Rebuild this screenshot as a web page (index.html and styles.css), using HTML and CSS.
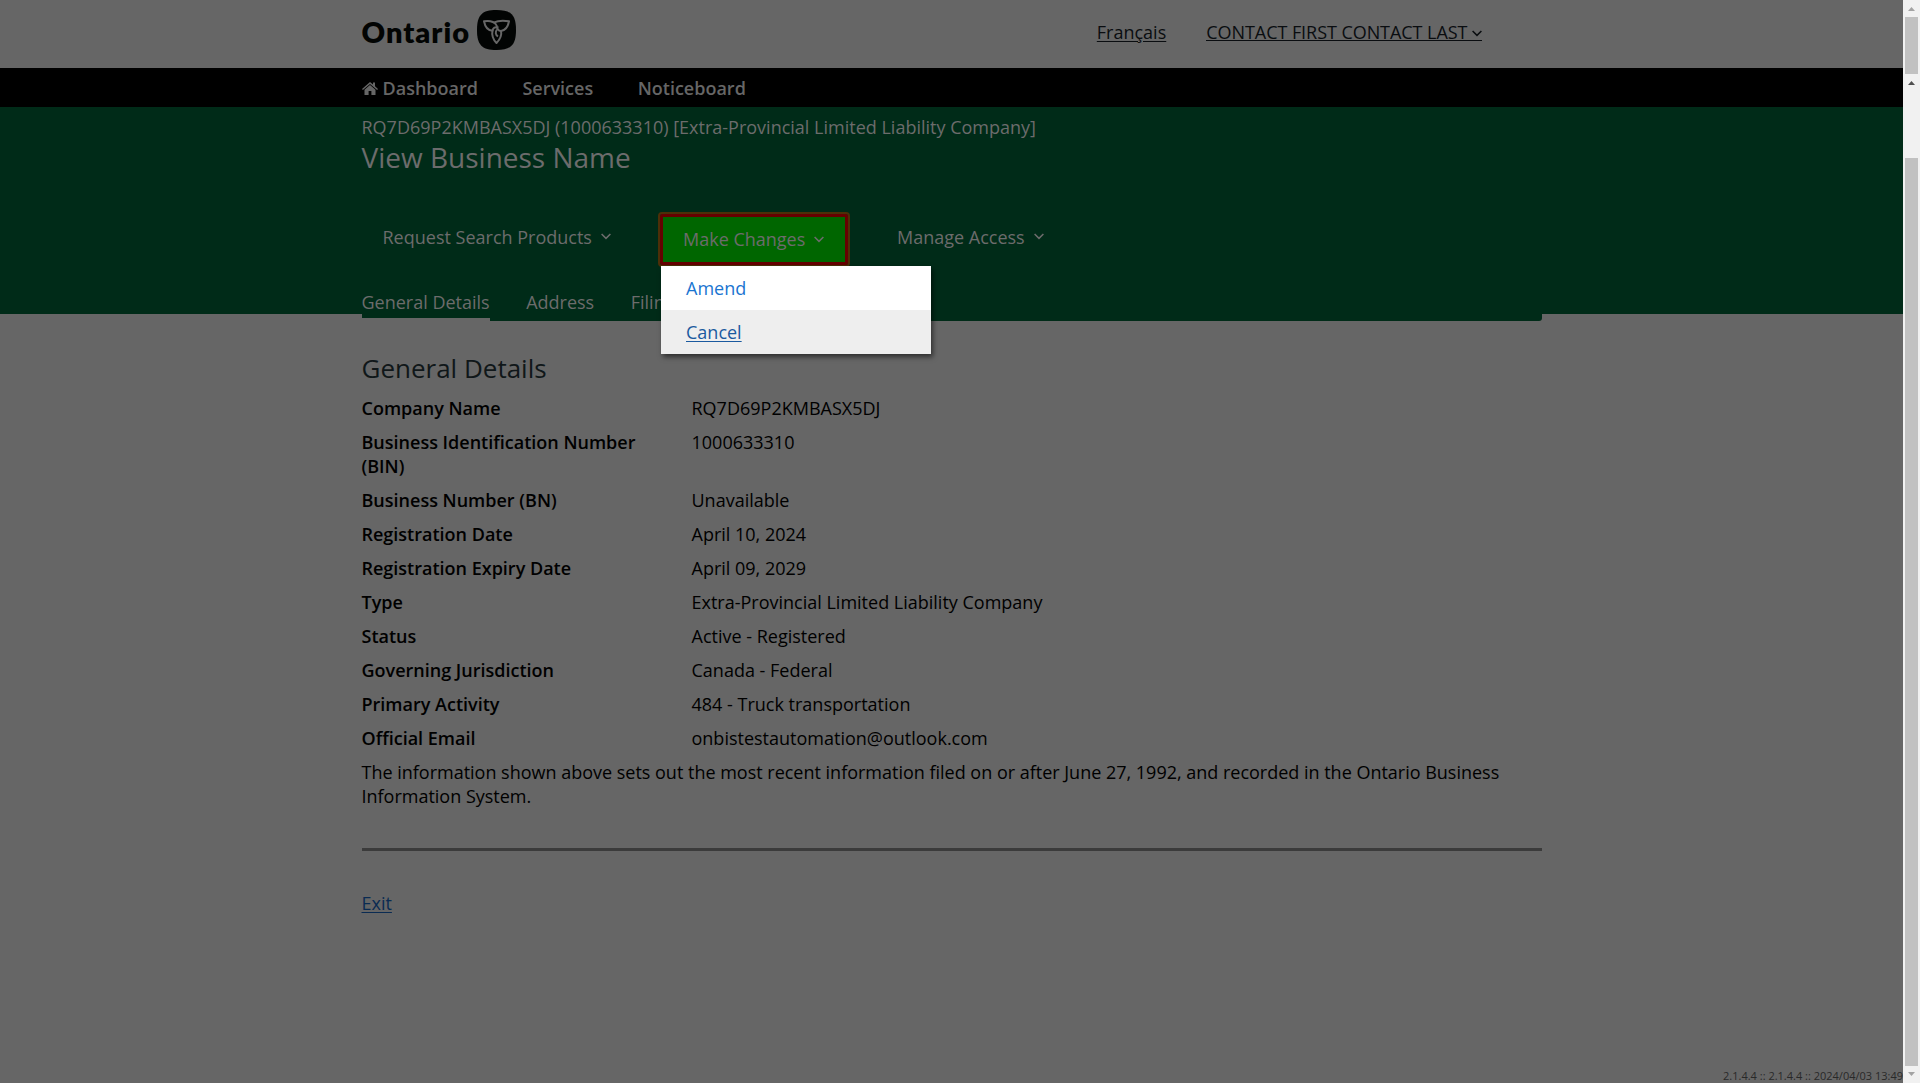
FILE: index.html
```html
<!DOCTYPE html>
<html lang="en">
<head>
<meta charset="utf-8">
<title>View Business Name</title>
<link rel="stylesheet" href="styles.css">
</head>
<body>
<div class="page">
  <header class="top">
    <div class="wrap top-row">
      <div class="logo">
        <span class="logo-word">Ontario</span>
        <svg class="logo-mark" viewBox="0 0 39 40"><path d="M19.500 0C34 0 39 5 39 20S34 40 19.500 40 0 35 0 20 5 0 19.500 0Z" fill="#020403"/><g fill="none" stroke="#666" stroke-width="2" stroke-linejoin="round"><path d="M19.500 15C17 11.500 12 10.500 7 11.300C8 16.500 10.500 20.500 15.500 20.800C16 18 18 16.500 21.500 17.500"/><path d="M16.500 12.700C21 10.500 27 10.300 32 11.300C31 16.500 28.500 20.500 24 21C20.500 20.800 19.800 18.500 19.500 15"/><path d="M15.500 20C14.500 25.500 16 29.500 19.500 33C23 29.500 25 25.500 24 20.500M20 19.500C18 22 18.500 25 21 26.500"/></g></svg>
      </div>
      <div class="user-links">
        <a class="link-lang">Français</a>
        <a class="link-user">CONTACT FIRST CONTACT LAST <svg class="chev" viewBox="0 0 10 7"><path d="M.6 1l4.400 4.400L9.400 1"/></svg></a>
      </div>
    </div>
  </header>
  <nav class="main-nav">
    <div class="wrap nav-row">
      <a class="nav-home"><svg class="home" viewBox="0 0 16 13"><path d="M8 0 0 7l.9 1L8 2l7.100 6 .9-1-3-2.700V.6h-2v2z"/><path d="M8 3 2.500 7.700V13H6.600V9h2.800v4h4.100V7.700z"/></svg>Dashboard</a>
      <a class="nav-services">Services</a>
      <a class="nav-notice">Noticeboard</a>
    </div>
  </nav>
  <section class="banner">
    <div class="wrap">
      <p class="entity">RQ7D69P2KMBASX5DJ (1000633310) [Extra-Provincial Limited Liability Company]</p>
      <h1>View Business Name</h1>
      <div class="actions">
        <a class="action products">Request Search Products<svg class="chev" viewBox="0 0 10 7"><path d="M.6 1l4.400 4.400L9.400 1"/></svg></a>
        <div class="action-menu">
          <a class="action changes">Make Changes<svg class="chev" viewBox="0 0 10 7"><path d="M.6 1l4.400 4.400L9.400 1"/></svg></a>
          <div class="menu"><a>Amend</a><a class="hover"><u>Cancel</u></a></div>
        </div>
        <a class="action access">Manage Access<svg class="chev" viewBox="0 0 10 7"><path d="M.6 1l4.400 4.400L9.400 1"/></svg></a>
      </div>
      <div class="tabs">
        <a class="tab active"><span>General Details</span></a>
        <a class="tab address"><span>Address</span></a>
        <a class="tab"><span>Filings</span></a>
      </div>
    </div>
  </section>
  <main class="wrap details">
    <h2>General Details</h2>
    <dl>
      <dt><span>Company Name</span></dt><dd><span>RQ7D69P2KMBASX5DJ</span></dd>
      <dt><span>Business Identification Number<br>(BIN)</span></dt><dd><span>1000633310</span></dd>
      <dt><span>Business Number (BN)</span></dt><dd><span>Unavailable</span></dd>
      <dt><span>Registration Date</span></dt><dd><span>April 10, 2024</span></dd>
      <dt><span>Registration Expiry Date</span></dt><dd><span>April 09, 2029</span></dd>
      <dt><span>Type</span></dt><dd><span>Extra-Provincial Limited Liability Company</span></dd>
      <dt><span>Status</span></dt><dd><span>Active - Registered</span></dd>
      <dt><span>Governing Jurisdiction</span></dt><dd><span>Canada - Federal</span></dd>
      <dt><span>Primary Activity</span></dt><dd><span>484 - Truck transportation</span></dd>
      <dt><span>Official Email</span></dt><dd><span>onbistestautomation@outlook.com</span></dd>
    </dl>
    <p class="note">The information shown above sets out the most recent information filed on or after June 27, 1992, and recorded in the Ontario Business<br>Information System.</p>
    <hr>
    <a class="exit">Exit</a>
  </main>
  <footer class="version">2.1.4.4 :: 2.1.4.4 :: 2024/04/03 13:49</footer>
</div>
<aside class="scrollbars">
  <i class="arrow up faint"></i><b class="thumb outer"></b><i class="arrow up"></i><b class="thumb inner"></b><i class="arrow down faint"></i>
</aside>
</body>
</html>
```

FILE: styles.css
```css
* { box-sizing: border-box; }
body {
  margin: 0;
  height: 1083px;
  display: flex;
  overflow: hidden;
  font: 18px/24px "Open Sans", sans-serif;
  color: #000;
}
h1, h2, p, dl, dd { margin: 0; font-weight: 400; }
svg { display: block; }

.page { width: 1903px; display: flex; flex-direction: column; background: #666; }
.wrap { width: 1180.5px; margin-left: 361.5px; }

.top { height: 68px; }
.top-row { display: flex; justify-content: space-between; padding-top: 10px; }
.logo { display: flex; height: 40px; }
.logo-word { width: 115.5px; font: 800 29px/44px Lato, sans-serif; letter-spacing: 1px; color: #020403; white-space: nowrap; }
.logo-mark { width: 39px; height: 40px; }
.user-links { display: flex; gap: 40px; margin-right: 60px; padding-top: 10px; color: #0a0d10; }
.user-links a { text-decoration: underline; text-underline-offset: 2px; white-space: nowrap; }
.chev { width: 10px; height: 7px; fill: none; stroke: currentColor; stroke-width: 1.5; }
.user-links .link-user {
  letter-spacing: -.06px;
  text-decoration: none;
  background: linear-gradient(currentColor, currentColor) 0 20px / 100% 1px no-repeat;
}
.link-user .chev { display: inline-block; vertical-align: 2px; }

.main-nav { height: 39px; background: #000; color: #666; }
.nav-row { display: flex; gap: 44.5px; padding-top: 8px; font-weight: 600; }
.nav-home { display: flex; gap: 5px; }
.home { width: 16px; height: 13px; margin-top: 6px; fill: currentColor; }

.banner { height: 207px; background: #002b18; color: #6c6c6c; }
.entity { padding-top: 8px; white-space: nowrap; }
h1 { font-size: 28px; line-height: 36px; }
.actions { display: flex; align-items: flex-start; height: 62px; margin-top: 38px; }
.action { display: flex; align-items: center; gap: 9px; height: 50px; white-space: nowrap; }
.products { width: 276.5px; padding: 0 0 3px 21px; }
.action-menu { position: relative; width: 231px; padding-left: 22px; }
.changes {
  width: 188px; height: 51px; margin-top: 1px; padding: 0 0 1px 20px;
  background: #060; border: 3px solid #600; outline: 2px solid #4d2f08; border-radius: 2px;
}
.access { padding: 0 0 3px 28px; }
.menu {
  position: absolute; left: 23px; top: 53px; width: 270px; z-index: 2;
  background: #fff; box-shadow: 2px 3px 5px rgba(0,0,0,.55);
  color: #1a75d1;
}
.menu a { display: block; height: 44px; padding: 10px 25px; }
.menu .hover { background: #eee; color: #1b5a9f; }
.menu u { text-underline-offset: 2px; }

.tabs { display: flex; gap: 36.5px; height: 46px; background: #002b18; border-bottom-right-radius: 3px; }
.tab { padding-top: 15px; }
.active { border-bottom: 3px solid #666; }

.details { flex: 1; padding-top: 38px; }
h2 { font-size: 26px; line-height: 32px; color: #101719; }
dl { display: grid; grid-template-columns: 330px 1fr; row-gap: 10px; margin-top: 12px; }
dt { font-weight: 600; }
.note { margin-top: 10px; white-space: nowrap; letter-spacing: -.008px; }
hr { height: 3px; margin: 40px 0; border: 0; background: #3b3b3b; }
.exit { color: #0a2b52; text-decoration: underline; text-underline-offset: 2px; }
.version { height: 13px; font-size: 11px; line-height: 12px; text-align: right; color: #292929; }

.scrollbars { width: 17px; display: flex; flex-direction: column; align-items: center; background: #f1f1f1; }
.thumb { width: 13px; background: #c1c1c1; }
.outer { height: 57px; margin: 6px 0 7px; }
.inner { height: 908px; margin: 73px 0 6px; }
.arrow { width: 7px; height: 4px; background: #505050; }
.up { clip-path: polygon(50% 0, 100% 100%, 0 100%); }
.down { clip-path: polygon(0 0, 100% 0, 50% 100%); }
.faint { background: #a3a3a3; }
.faint.up { margin-top: 7px; }
```
